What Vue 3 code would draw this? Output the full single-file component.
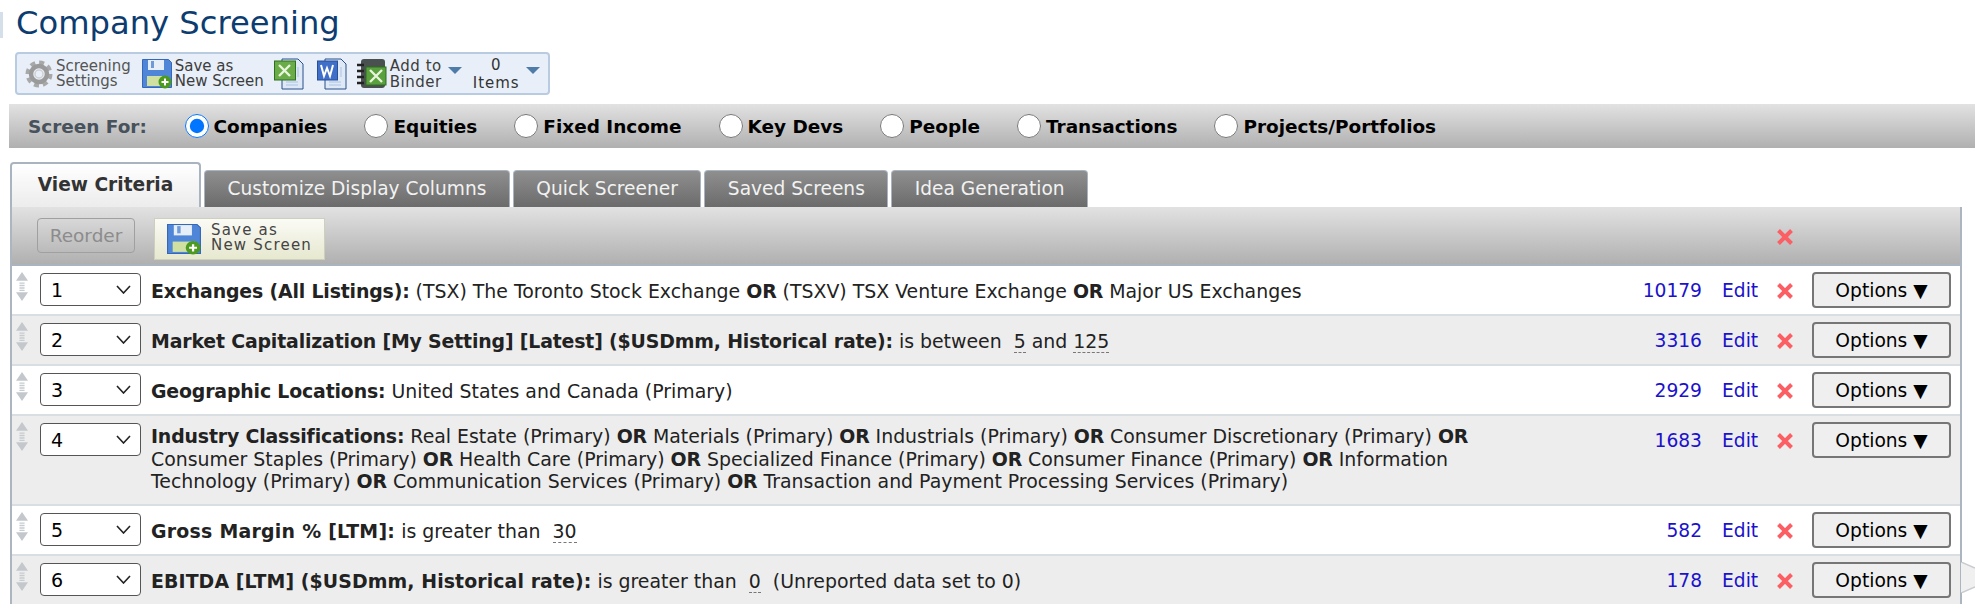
<script setup>
const radios = [
  { label: 'Companies', checked: true },
  { label: 'Equities' },
  { label: 'Fixed Income' },
  { label: 'Key Devs' },
  { label: 'People' },
  { label: 'Transactions' },
  { label: 'Projects/Portfolios' }
]
const tabs = ['Customize Display Columns', 'Quick Screener', 'Saved Screens', 'Idea Generation']
const rows = [
  { n: 1, count: '10179', parts: [['b', 'Exchanges (All Listings):'], ['t', ' (TSX) The Toronto Stock Exchange '], ['b', 'OR'], ['t', ' (TSXV) TSX Venture Exchange '], ['b', 'OR'], ['t', ' Major US Exchanges']] },
  { n: 2, count: '3316', parts: [['b', 'Market Capitalization [My Setting] [Latest] ($USDmm, Historical rate):'], ['t', ' is between \u00a0'], ['v', '5'], ['t', ' and '], ['v', '125']] },
  { n: 3, count: '2929', parts: [['b', 'Geographic Locations:'], ['t', ' United States and Canada (Primary)']] },
  { n: 4, count: '1683', tall: true, parts: [['b', 'Industry Classifications:'], ['t', ' Real Estate (Primary) '], ['b', 'OR'], ['t', ' Materials (Primary) '], ['b', 'OR'], ['t', ' Industrials (Primary) '], ['b', 'OR'], ['t', ' Consumer Discretionary (Primary) '], ['b', 'OR'], ['t', ' Consumer Staples (Primary) '], ['b', 'OR'], ['t', ' Health Care (Primary) '], ['b', 'OR'], ['t', ' Specialized Finance (Primary) '], ['b', 'OR'], ['t', ' Consumer Finance (Primary) '], ['b', 'OR'], ['t', ' Information Technology (Primary) '], ['b', 'OR'], ['t', ' Communication Services (Primary) '], ['b', 'OR'], ['t', ' Transaction and Payment Processing Services (Primary)']] },
  { n: 5, count: '582', spacing: '0.26px', parts: [['b', 'Gross Margin % [LTM]:'], ['t', ' is greater than \u00a0'], ['v', '30']] },
  { n: 6, count: '178', spacing: '0.1px', parts: [['b', 'EBITDA [LTM] ($USDmm, Historical rate):'], ['t', ' is greater than \u00a0'], ['v', '0'], ['t', ' \u00a0(Unreported data set to 0)']] }
]
const options = [1, 2, 3, 4, 5, 6]
</script>

<template>
  <div class="page">
    <div class="sliver"></div>
    <h1 class="title">Company Screening</h1>

    <div class="toolbar">
      <svg class="i-gear" width="28" height="30" viewBox="0 0 28 30">
        <circle cx="14" cy="15" r="11.5" fill="none" stroke="#a8a8a8" stroke-width="4" stroke-dasharray="5 4"/>
        <circle cx="14" cy="15" r="8" fill="none" stroke="#9a9a9a" stroke-width="4.5"/>
        <circle cx="14" cy="15" r="4" fill="none" stroke="#d0d0d0" stroke-width="1.5"/>
      </svg>
      <span class="tb-text t-settings">Screening<br>Settings</span>
      <svg class="i-floppy" width="30" height="31" viewBox="0 0 30 31">
        <path d="M0.5 1.5h26l3 3v25h-29z" fill="#4f86d8" stroke="#3568b8"/>
        <rect x="6" y="2" width="16" height="10" fill="#e6eef8"/>
        <rect x="9" y="3" width="3" height="7" fill="#6e9ad8"/>
        <rect x="5" y="18" width="20" height="10" fill="#cfe0a0"/>
        <circle cx="23" cy="24" r="6.5" fill="#4c9a1e"/>
        <path d="M23 20.5v7M19.5 24h7" stroke="#fff" stroke-width="2"/>
      </svg>
      <span class="tb-text t-save">Save as<br>New Screen</span>
      <svg class="i-doc" width="30" height="32" viewBox="0 0 30 32">
        <path d="M8 1h16l5 5v25H8z" fill="#dfe9f6" stroke="#27508a"/>
        <path d="M12 24h12M12 27h12M24 9v10" stroke="#a9c3e3"/>
        <rect x="0.5" y="3" width="21" height="19" fill="#6aac48" stroke="#2f6f22"/>
        <path d="M5 7l11 11M16 7L5 18" stroke="#e8f4dc" stroke-width="2.4"/>
      </svg>
      <svg class="i-doc i-word" width="30" height="32" viewBox="0 0 30 32">
        <path d="M8 1h16l5 5v25H8z" fill="#dfe9f6" stroke="#27508a"/>
        <path d="M12 24h12M12 27h12M24 9v10" stroke="#a9c3e3"/>
        <rect x="0.5" y="3" width="20" height="19" fill="#3f6fc8" stroke="#28509a"/>
        <path d="M4 7l3 11 3-8 3 8 3-11" fill="none" stroke="#fff" stroke-width="2"/>
      </svg>
      <svg class="i-binder" width="30" height="31" viewBox="0 0 30 31">
        <rect x="4" y="1" width="24" height="29" rx="3" fill="#4a4f50"/>
        <path d="M0 7h7M0 13h7M0 19h7M0 25h7" stroke="#222" stroke-width="2.4"/>
        <rect x="9" y="9" width="20" height="18" fill="#5aa03c" stroke="#2f6f22"/>
        <path d="M13 12l12 12M25 12L13 24" stroke="#e8f4dc" stroke-width="2.4"/>
      </svg>
      <span class="tb-text t-binder">Add to<br>Binder</span>
      <span class="arrow a1"></span>
      <span class="tb-text t-items">0<br>Items</span>
      <span class="arrow a2"></span>
    </div>

    <div class="screen-for">
      <span class="sf-label">Screen For:</span>
      <label v-for="r in radios" :key="r.label" class="radio">
        <input type="radio" name="screen" :checked="r.checked">
        <span>{{ r.label }}</span>
      </label>
    </div>

    <div class="tabs">
      <div class="tab active">View Criteria</div>
      <div v-for="t in tabs" :key="t" class="tab">{{ t }}</div>
    </div>

    <div class="panel">
      <div class="panel-head">
        <button class="reorder" disabled>Reorder</button>
        <div class="save-btn">
          <svg width="34" height="32" viewBox="0 0 30 31" preserveAspectRatio="none">
            <path d="M0.5 1.5h26l3 3v25h-29z" fill="#4f86d8" stroke="#3568b8"/>
            <rect x="6" y="2" width="16" height="10" fill="#e6eef8"/>
            <rect x="9" y="3" width="3" height="7" fill="#6e9ad8"/>
            <rect x="5" y="18" width="20" height="10" fill="#cfe0a0"/>
            <circle cx="23" cy="24" r="6.5" fill="#4c9a1e"/>
            <path d="M23 20.5v7M19.5 24h7" stroke="#fff" stroke-width="2"/>
          </svg>
          <span class="save-text">Save as<br>New Screen</span>
        </div>
        <svg class="x head-x" width="18" height="18" viewBox="0 0 18 18"><path d="M2.5 2.5l13 13M15.5 2.5l-13 13" stroke="#fb5f63" stroke-width="4"/></svg>
      </div>

      <div v-for="row in rows" :key="row.n" class="row" :class="{ tall: row.tall }">
        <svg class="handle" width="12" height="29" viewBox="0 0 14 30" preserveAspectRatio="none">
          <path d="M7 0l7 9H0z" fill="#c4c8cc"/>
          <path d="M4 11.5h6M4 14h6M4 16.5h6M4 19h6" stroke="#c8ccd0" stroke-width="1.4"/>
          <path d="M7 30l7-9H0z" fill="#c4c8cc"/>
        </svg>
        <div class="order-wrap">
          <select class="order" :value="row.n">
            <option v-for="o in options" :key="o" :value="o">{{ o }}</option>
          </select>
          <svg class="chev" width="15" height="9" viewBox="0 0 15 9"><path d="M1 1l6.5 7L14 1" fill="none" stroke="#222" stroke-width="1.6"/></svg>
        </div>
        <div class="desc">
          <template v-for="(p, i) in row.parts" :key="i">
            <b v-if="p[0] === 'b'" :style="row.spacing ? { letterSpacing: row.spacing } : null">{{ p[1] }}</b>
            <span v-else-if="p[0] === 'v'" class="val">{{ p[1] }}</span>
            <template v-else>{{ p[1] }}</template>
          </template>
        </div>
        <a class="count">{{ row.count }}</a>
        <a class="edit">Edit</a>
        <svg class="x" width="18" height="18" viewBox="0 0 18 18"><path d="M2.5 2.5l13 13M15.5 2.5l-13 13" stroke="#fb5f63" stroke-width="4"/></svg>
        <button class="opt">Options ▼</button>
      </div>

      <svg class="pointer" width="14" height="31" viewBox="0 0 14 31">
        <path d="M0 0L14 6V25L0 31Z" fill="#f0f0f0"/>
        <path d="M0 0L14 6M14 25L0 31" stroke="#c8ccd0" stroke-width="1.5" fill="none"/>
      </svg>
    </div>
  </div>
</template>

<style>
html, body { margin: 0; background: #fff; overflow: hidden; }
</style>

<style scoped>
.page {
  position: relative;
  width: 1975px;
  height: 604px;
  overflow: hidden;
  font-family: "DejaVu Sans", Verdana, sans-serif;
  color: #222;
}
.sliver {
  position: absolute;
  left: 0; top: 12px;
  width: 3px; height: 26px;
  background: #d5dfea;
}
.title {
  margin: 0;
  padding: 0 0 0 16px;
  height: 52px;
  line-height: 46px;
  font-size: 32.2px;
  font-weight: 400;
  color: #0c3c70;
}
.toolbar {
  display: flex;
  align-items: center;
  box-sizing: border-box;
  width: 535px;
  height: 43px;
  margin-left: 15px;
  padding-left: 8px;
  background: #e8eff8;
  border: 2px solid #b9cbe0;
  border-radius: 4px;
}
.toolbar svg { flex: none; }
.tb-text {
  font-size: 15px;
  line-height: 15px;
  color: #3d3d3d;
  white-space: nowrap;
}
.t-settings { margin-left: 3px; color: #555; }
.i-floppy { margin-left: 11px; }
.t-save { margin-left: 3px; }
.i-doc { margin-left: 10px; }
.i-word { margin-left: 13px; }
.i-binder { margin-left: 10px; }
.t-binder { margin-left: 3px; line-height: 16px; letter-spacing: 0.5px; }
.arrow {
  width: 0; height: 0;
  border-left: 7px solid transparent;
  border-right: 7px solid transparent;
  border-top: 7px solid #4f7ba8;
  margin-bottom: 6px;
}
.a1 { margin-left: 6px; }
.t-items { margin-left: 11px; text-align: center; color: #333; line-height: 18px; letter-spacing: 1px; }
.a2 { margin-left: 6px; }

.screen-for {
  display: flex;
  align-items: center;
  height: 44px;
  margin: 9px 0 0 9px;
  padding-left: 19px;
  background: linear-gradient(#e2e2e2, #b0b0b0);
  font-weight: 700;
  font-size: 18.45px;
  color: #000;
}
.sf-label { color: #47525c; width: 156.5px; }
.radio { display: flex; align-items: center; gap: 5px; margin-right: 37px; }
.radio input { width: 24px; height: 24px; margin: 0; }

.tabs {
  display: flex;
  align-items: flex-end;
  gap: 3px;
  margin: 14px 0 0 10px;
  height: 45px;
}
.tab {
  box-sizing: border-box;
  height: 37px;
  padding: 0 22.5px;
  line-height: 36px;
  font-size: 18.6px;
  color: #f2f2f2;
  background: linear-gradient(#8f8f8f, #6b6b6b);
  border: 1px solid #a9b4c0;
  border-bottom: 0;
  border-radius: 4px 4px 0 0;
}
.tab.active {
  height: 45px;
  width: 191px;
  padding: 0;
  text-align: center;
  line-height: 42px;
  font-weight: 700;
  color: #333;
  background: linear-gradient(#fff, #ececec);
  border: 2px solid #a9b4c0;
  border-bottom: 0;
}

.panel {
  position: relative;
  box-sizing: border-box;
  width: 1952px;
  margin-left: 10px;
  border: 2px solid #adb6c0;
  border-bottom: 0;
  border-top: 0;
  overflow: visible;
}
.panel-head {
  display: flex;
  align-items: flex-start;
  height: 59px;
  box-sizing: border-box;
  padding: 11px 0 0 25px;
  background: linear-gradient(#e2e2e2, #b0b0b0);
  border-bottom: 2px solid #a9b4c0;
  position: relative;
}
.reorder {
  box-sizing: border-box;
  width: 98px;
  height: 35px;
  font: 18.5px "DejaVu Sans", sans-serif;
  color: #8c8c8c;
  background: transparent;
  border: 1px solid #a0a0a0;
  border-radius: 4px;
  padding: 0;
}
.save-btn {
  display: flex;
  align-items: flex-start;
  box-sizing: border-box;
  width: 171px;
  height: 42px;
  margin-left: 19px;
  padding: 4px 0 0 12px;
  background: linear-gradient(#fbfbf6, #e6e8cf);
  border: 1px solid #cfcfbd;
}
.save-text {
  margin-left: 10px;
  font-size: 15px;
  line-height: 15px;
  letter-spacing: 1.2px;
  color: #444;
  white-space: nowrap;
}
.head-x { position: absolute; left: 1764px; top: 21px; }

.row {
  display: flex;
  align-items: flex-start;
  box-sizing: content-box;
  min-height: 48px;
  padding-left: 4px;
  border-bottom: 2px solid #d9dee3;
  background: #fff;
}
.row:nth-of-type(odd) { background: #ededed; }
.handle { flex: none; margin-top: 6px; }
.order-wrap {
  position: relative;
  flex: none;
  width: 101px;
  height: 33px;
  margin: 7px 0 0 12px;
}
.order {
  display: block;
  appearance: none;
  box-sizing: border-box;
  width: 101px;
  height: 33px;
  padding: 0 0 0 10px;
  font: 19px "DejaVu Sans", sans-serif;
  color: #000;
  background: #fff;
  border: 1.5px solid #555;
  border-radius: 4px;
}
.chev { position: absolute; left: 76px; top: 12px; pointer-events: none; }
.desc {
  flex: none;
  width: 1328px;
  margin-left: 10px;
  padding: 14px 0 11.5px;
  font-size: 18.9px;
  line-height: 22.5px;
  color: #222;
}
.tall .desc { padding-top: 9px; }
.desc b { font-weight: 700; letter-spacing: -0.16px; }
.val { border-bottom: 1px dashed #777; }
.count, .edit {
  margin-top: 14px;
  font-size: 18.67px;
  line-height: 22.5px;
  color: #1a12cc;
}
.count { flex: none; width: 223px; text-align: right; }
.edit { flex: none; margin-left: 20px; width: 36px; }
.x { flex: none; }
.row .x { margin: 16px 0 0 18px; }
.opt {
  flex: none;
  box-sizing: border-box;
  width: 139px;
  height: 36px;
  margin: 6px 0 0 18px;
  padding: 0;
  font: 18.67px "DejaVu Sans", sans-serif;
  color: #000;
  background: #efefef;
  border: 2px solid #767676;
  border-radius: 4px;
}
.pointer { position: absolute; left: 1949px; top: 355px; }
</style>
